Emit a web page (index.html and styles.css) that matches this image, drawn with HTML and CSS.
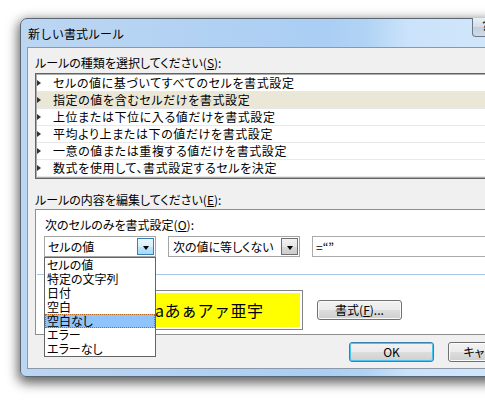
FILE: index.html
```html
<!DOCTYPE html>
<html lang="ja">
<head>
<meta charset="utf-8">
<title>新しい書式ルール</title>
<link rel="stylesheet" href="styles.css">
</head>
<body>
<div class="window">
  <div class="titlebar">
    <span class="title">新しい書式ルール</span>
    <div class="capbtn">?</div>
  </div>
  <div class="client">
    <div class="label l1">ルールの種類を選択してください(<u>S</u>):</div>
    <ul class="list">
      <li><i class="tri"></i>セルの値に基づいてすべてのセルを書式設定</li>
      <li class="sel"><i class="tri"></i>指定の値を含むセルだけを書式設定</li>
      <li><i class="tri"></i>上位または下位に入る値だけを書式設定</li>
      <li><i class="tri"></i>平均より上または下の値だけを書式設定</li>
      <li><i class="tri"></i>一意の値または重複する値だけを書式設定</li>
      <li><i class="tri"></i>数式を使用して、書式設定するセルを決定</li>
    </ul>
    <div class="label l2">ルールの内容を編集してください(<u>E</u>):</div>
    <div class="group">
      <div class="label l3">次のセルのみを書式設定(<u>O</u>):</div>
      <div class="row">
        <div class="combo c1"><span class="ctext">セルの値</span><span class="dd hot"><i class="arrow"></i></span></div>
        <div class="combo c2"><span class="ctext">次の値に等しくない</span><span class="dd"><i class="arrow"></i></span></div>
        <div class="textbox">=“”</div>
      </div>
      <div class="sep"></div>
      <div class="preview-row">
        <div class="preview"><div class="yellow">Aaあぁアァ亜宇</div></div>
        <div class="btn fmt">書式(<u>F</u>)...</div>
      </div>
      <ul class="droplist">
        <li>セルの値</li>
        <li>特定の文字列</li>
        <li>日付</li>
        <li>空白</li>
        <li class="hl">空白なし</li>
        <li>エラー</li>
        <li>エラーなし</li>
      </ul>
    </div>
    <div class="buttons">
      <div class="btn ok">OK</div>
      <div class="btn cancel">キャンセル</div>
    </div>
  </div>
</div>
</body>
</html>
```

FILE: styles.css
```css
html, body {
  margin: 0;
  background: #ffffff;
}
body {
  width: 485px;
  height: 400px;
  overflow: hidden;
  padding: 18px 0 0 20px;
  box-sizing: border-box;
  font-family: "Noto Sans CJK JP", sans-serif;
  font-size: 12px;
  color: #000;
}
u { text-decoration: underline; text-underline-offset: 1px; }

.window {
  position: relative;
  width: 540px;
  box-sizing: border-box;
  border: 1px solid #5b6673;
  border-radius: 7px 7px 0 6px;
  padding: 0 6px 7px 6px;
  background: linear-gradient(to right, #bcd6f2 0%, #b3d2f3 30%, #aacef4 55%, #b0d3f5 64%, #cbe3fa 72%, #d3e8fb 100%);
  box-shadow: 0 4px 12px 2px rgba(0,0,0,0.62);
}
.titlebar {
  height: 28px;
  display: flex;
  align-items: center;
}
.title {
  padding-left: 1px;
  font-size: 12px;
  line-height: 14px;
  padding-top: 1px;
}
.capbtn {
  position: absolute;
  top: -1px;
  left: 451px;
  width: 26px;
  height: 19px;
  box-sizing: border-box;
  border: 1px solid #6c7888;
  border-top: none;
  border-radius: 0 0 4px 4px;
  background: linear-gradient(#e9eff6, #d3dde8 50%, #c3cfdc 51%, #cfdbe8);
  font-weight: bold;
  font-size: 12px;
  line-height: 16px;
  text-align: center;
  color: #1d2c3c;
}

.client {
  border: 1px solid #8a98aa;
  background: #f0f0f0;
  height: 320px;
  display: flex;
  flex-direction: column;
  font-feature-settings: "palt";
}
.label {
  height: 14px;
  line-height: 14px;
  white-space: nowrap;
}
.l1 { margin: 8px 0 0 7px; }
.list {
  list-style: none;
  margin: 3px 0 0 7px;
  padding: 1px;
  border: 1px solid #646464;
  background: #acacac;
}
.list li {
  height: 16px;
  border-bottom: 1px solid #e8e8e8;
  background: #fff;
  display: flex;
  align-items: center;
  white-space: nowrap;
  line-height: 16px;
  letter-spacing: 0.6px;
}
.list li.sel { background: #ebe7d7; }
.tri {
  display: block;
  width: 0;
  height: 0;
  border-left: 4px solid #333;
  border-top: 3.5px solid transparent;
  border-bottom: 3.5px solid transparent;
  margin-right: 12px;
}
.l2 { margin: 14px 0 0 7px; }

.group {
  position: relative;
  margin: 2px 0 0 7px;
  height: 124px;
  border: 1px solid #8f8f8f;
  background: #ffffff;
  display: flex;
  flex-direction: column;
}
.l3 { margin: 8px 0 0 9px; }
.row {
  margin-top: 4px;
  display: flex;
  height: 21px;
}
.combo {
  box-sizing: border-box;
  height: 21px;
  border: 1px solid #a5a5a5;
  display: flex;
  align-items: center;
  justify-content: space-between;
  background: #fff;
}
.c1 { margin-left: 8px; width: 112px; padding-left: 3px; }
.c2 { margin-left: 12px; width: 132px; padding-left: 4px; }
.ctext { white-space: nowrap; line-height: 14px; }
.dd {
  width: 17px;
  height: 17px;
  box-sizing: border-box;
  margin-right: 1px;
  border: 1px solid #707070;
  background: linear-gradient(#f2f2f2, #e6e6e6 50%, #d8d8d8 51%, #cdcdcd);
  display: flex;
  align-items: center;
  justify-content: center;
}
.dd.hot {
  border-color: #3c7fb1;
  background: linear-gradient(#eaf6fd, #d9f0fc 50%, #bee6fd 51%, #a7d9f5);
}
.arrow {
  display: block;
  width: 0;
  height: 0;
  margin-top: 2px;
  border-top: 4px solid #000;
  border-left: 3.5px solid transparent;
  border-right: 3.5px solid transparent;
}
.textbox {
  margin-left: 12px;
  width: 220px;
  box-sizing: border-box;
  height: 21px;
  border: 1px solid #ababab;
  padding-left: 3px;
  line-height: 19px;
}
.sep {
  margin: 17px 0 0 1px;
  height: 1px;
  background: #a7c7ea;
}
.preview-row {
  margin-top: 15px;
  display: flex;
  align-items: center;
}
.preview {
  margin-left: 69px;
  width: 198px;
  height: 40px;
  box-sizing: border-box;
  border: 1px solid #838383;
  padding: 2px;
  background: #fff;
}
.yellow {
  height: 100%;
  background: #ffff00;
  display: flex;
  align-items: center;
  justify-content: center;
  font-size: 16px;
  font-feature-settings: normal;
  letter-spacing: 0.5px;
}
.btn {
  box-sizing: border-box;
  width: 85px;
  height: 20px;
  border: 1px solid #707070;
  border-radius: 3px;
  background: linear-gradient(#f2f2f2, #ebebeb 50%, #dddddd 51%, #cfcfcf);
  box-shadow: inset 0 0 0 1px #fbfbfb;
  display: flex;
  align-items: center;
  justify-content: center;
  line-height: 14px;
  white-space: nowrap;
}
.fmt { margin-left: 14px; }
.droplist {
  position: absolute;
  left: 8px;
  top: 47px;
  width: 112px;
  box-sizing: border-box;
  margin: 0;
  padding: 0;
  list-style: none;
  border: 1px solid #646464;
  background: #fff;
  z-index: 2;
}
.droplist li {
  height: 14px;
  line-height: 14px;
  padding-left: 2px;
  white-space: nowrap;
}
.droplist li.hl {
  background: #8fc3fb;
  outline: 1px dotted #b5651d;
  outline-offset: -1px;
}
.buttons {
  margin-top: 7px;
  display: flex;
}
.ok {
  margin-left: 321px;
  border-color: #3c7fb1;
  box-shadow: inset 0 0 0 1px #4fc3f0;
}
.cancel { margin-left: 14px; }
```
